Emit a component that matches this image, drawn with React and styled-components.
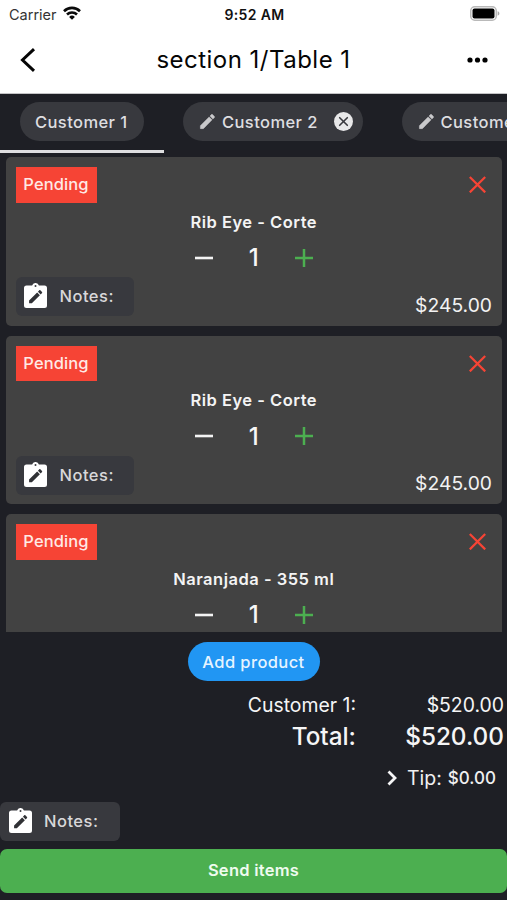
import { useState } from 'react';
import styled, { createGlobalStyle } from 'styled-components';

const GlobalStyle = createGlobalStyle`
  * {
    box-sizing: border-box;
  }
  body {
    margin: 0;
    background: #1e1f25;
    font-family: Inter, 'Liberation Sans', sans-serif;
  }
  button {
    border: none;
    padding: 0;
    background: none;
    color: inherit;
    font-family: inherit;
  }
  svg {
    display: block;
    flex-shrink: 0;
  }
`;

const Screen = styled.div`
  display: flex;
  flex-direction: column;
  width: 507px;
  height: 900px;
  overflow: hidden;
  color: #f2f2f2;
  background: #1e1f25;
`;

const StatusBar = styled.div`
  display: grid;
  grid-template-columns: 1fr auto 1fr;
  align-items: center;
  height: 28px;
  padding: 0 7px 0 9px;
  color: #111;
  background: #fff;
  .carrier {
    display: flex;
    align-items: center;
    gap: 6px;
    color: #333;
    font-size: 14.5px;
  }
  .time {
    font-size: 14px;
    font-weight: 600;
    letter-spacing: 0.35px;
  }
  .battery {
    justify-self: end;
    margin-top: -2px;
  }
  .wifi {
    margin-top: -3px;
  }
`;

const NavBar = styled.header`
  display: grid;
  grid-template-columns: 60px 1fr 60px;
  align-items: center;
  height: 66px;
  padding-bottom: 2px;
  color: #050505;
  background: #fff;
  border-bottom: 1px solid #c4c4c6;
  h1 {
    margin: 0;
    font-size: 24px;
    font-weight: 400;
    letter-spacing: 0.48px;
    text-align: center;
  }
  .back {
    padding-left: 20px;
  }
  .more {
    padding-left: 20px;
  }
`;

const Tabs = styled.nav`
  display: flex;
  flex-shrink: 0;
  height: 59px;
  overflow: hidden;
`;

const Tab = styled.div`
  flex-shrink: 0;
  height: 59px;
  padding: 8px 19.5px 0 ${(props) => (props.$active ? 20 : 19.5)}px;
  border-bottom: 3px solid ${(props) => (props.$active ? '#dedee0' : 'transparent')};
`;

const Chip = styled.button`
  display: flex;
  align-items: center;
  width: ${(props) => props.$width}px;
  height: 39px;
  padding: 0 10px 0 15px;
  border-radius: 20px;
  color: #dedee0;
  background: #38393e;
  font-size: 16.5px;
  font-weight: 500;
  letter-spacing: 0.42px;
  white-space: nowrap;
  .pencil {
    margin-right: 5px;
  }
  .remove {
    margin-left: auto;
  }
`;

const ItemList = styled.main`
  display: flex;
  flex-direction: column;
  flex-shrink: 0;
  gap: 10px;
  height: 479px;
  padding: 4px 5px 0 6px;
  overflow-y: auto;
  scrollbar-width: none;
`;

const Card = styled.section`
  display: flex;
  flex-direction: column;
  flex-shrink: 0;
  height: 168.5px;
  padding: 10px 10px 9px 9.5px;
  border-radius: 5px;
  background: #424242;
`;

const CardTop = styled.div`
  display: flex;
  align-items: center;
  justify-content: space-between;
  height: 35.5px;
  padding-right: 6px;
`;

const Badge = styled.span`
  width: 81px;
  height: 35.5px;
  color: #ffe9e5;
  background: #f64435;
  font-size: 16.5px;
  font-weight: 500;
  letter-spacing: 0.1px;
  line-height: 35px;
  text-align: center;
`;

const ItemName = styled.h2`
  margin: 9px 0 1px;
  color: #f4f4f4;
  font-size: 16.5px;
  font-weight: 600;
  letter-spacing: 0.5px;
  line-height: 20px;
  text-align: center;
`;

const Quantity = styled.div`
  display: grid;
  grid-template-columns: 50px 50px 50px;
  align-items: center;
  justify-content: center;
  justify-items: center;
  height: 50px;
  span {
    color: #f7f7f7;
    font-size: 24px;
    font-weight: 500;
  }
`;

const CardBottom = styled.div`
  display: flex;
  justify-content: space-between;
  margin-top: -5.5px;
`;

const Price = styled.span`
  padding-top: 15.5px;
  font-size: 19.3px;
  line-height: 24px;
`;

const NotesButton = styled.button`
  display: flex;
  align-items: center;
  gap: 12.5px;
  width: ${(props) => props.$width}px;
  height: 39px;
  padding: 0 0 1px 8.5px;
  border-radius: 6px;
  color: #d8d8da;
  background: #38393e;
  font-size: 16.5px;
  font-weight: 500;
  letter-spacing: 0.48px;
`;

const Footer = styled.footer`
  display: flex;
  flex-direction: column;
  flex: 1;
  padding-top: 10px;
`;

const AddButton = styled.button`
  align-self: center;
  width: 132px;
  height: 39px;
  border-radius: 20px;
  color: #e6f4ff;
  background: #2196f3;
  font-size: 16.5px;
  font-weight: 500;
  letter-spacing: 0.4px;
`;

const SumRow = styled.div`
  display: grid;
  grid-template-columns: 356px 148px;
  height: ${(props) => (props.$total ? 34 : 28)}px;
  margin-top: ${(props) => (props.$total ? 0 : 10)}px;
  color: #f5f5f6;
  font-size: ${(props) => (props.$total ? 24.3 : 19.4)}px;
  font-weight: ${(props) => (props.$total ? 500 : 400)};
  line-height: ${(props) => (props.$total ? 35 : 28)}px;
  text-align: right;
`;

const Tip = styled.button`
  display: flex;
  align-items: center;
  align-self: flex-end;
  height: 30px;
  margin: 10px 11px 0 0;
  color: #f0f0f1;
  font-size: 19.5px;
  svg {
    margin-right: 10px;
  }
  b {
    margin-left: 6px;
    font-size: 17px;
    font-weight: 500;
  }
`;

const FooterNotes = styled.div`
  margin: 9px 0 7.5px;
`;

const SendButton = styled.button`
  height: 44px;
  padding-bottom: 1px;
  border-radius: 7px;
  color: #effbef;
  background: #4caf50;
  font-size: 16.5px;
  font-weight: 600;
  letter-spacing: 0.25px;
`;

const pencilPath =
  'M3 17.25V21h3.75L17.81 9.94l-3.75-3.75L3 17.25zM20.71 7.04c.39-.39.39-1.02 0-1.41l-2.34-2.34c-.39-.39-1.02-.39-1.41 0l-1.83 1.83 3.75 3.75 1.83-1.83z';

const PencilIcon = () => (
  <svg className="pencil" width="19" height="19" viewBox="0 0 24 24">
    <path d={pencilPath} fill="#c9c9cb" stroke="#c9c9cb" strokeWidth=".6" />
  </svg>
);

const RemoveIcon = () => (
  <svg className="remove" width="19" height="19" viewBox="0 0 19 19">
    <circle cx="9.5" cy="9.5" r="9.5" fill="#e8e8e9" />
    <path d="M5.7 5.7l7.6 7.6M13.3 5.7l-7.6 7.6" stroke="#38393e" strokeWidth="1.6" strokeLinecap="round" />
  </svg>
);

const ClipboardIcon = () => (
  <svg width="23" height="26" viewBox="0 0 23 26">
    <path
      d="M2.5 2.4h5.6a3.6 3.6 0 0 1 6.8 0h5.6a2.5 2.5 0 0 1 2.5 2.500v17.600a2.500 2.500 0 0 1-2.500 2.500h-18A2.500 2.500 0 0 1 0 22.500V4.900a2.500 2.500 0 0 1 2.500-2.500z"
      fill="#fff"
    />
    <circle cx="11.5" cy="2.9" r="1" fill="#38393e" />
    <g transform="translate(2.9 4.9) scale(.73)">
      <path d={pencilPath} fill="#303135" />
    </g>
  </svg>
);

const WifiIcon = () => (
  <svg className="wifi" width="18" height="14" viewBox="0 0 18 14">
    <g fill="none" stroke="#0a0a0a" strokeWidth="2.6">
      <path d="M1 5.2a11.4 11.4 0 0 1 16 0" />
      <path d="M4 8.5a7.2 7.2 0 0 1 10 0" />
    </g>
    <path d="M9 13.8L6.1 10.900a4.200 4.200 0 0 1 5.800 0z" fill="#0a0a0a" />
  </svg>
);

const BatteryIcon = () => (
  <svg className="battery" width="30" height="15" viewBox="0 0 30 15">
    <rect x=".75" y=".75" width="25.5" height="13.5" rx="4" fill="#fff" stroke="#b9b9b9" strokeWidth="1.5" />
    <rect x="2.5" y="2.5" width="22" height="10" rx="2" fill="#000" />
    <path d="M27.6 5.3c2.400.7 2.400 3.700 0 4.400z" fill="#a8a8a8" />
  </svg>
);

const items = [
  { id: 1, name: 'Rib Eye - Corte', price: 245 },
  { id: 2, name: 'Rib Eye - Corte', price: 245 },
  { id: 3, name: 'Naranjada - 355 ml', price: 30 },
];

const money = (value) => `$${value.toFixed(2)}`;

const OrderItem = ({ name, price }) => {
  const [count, setCount] = useState(1);

  return (
    <Card>
      <CardTop>
        <Badge>Pending</Badge>
        <svg width="17" height="17" viewBox="0 0 17 17">
          <path d="M.8 1l15.4 15.400M16.200 1L.8 16.400" stroke="#f64435" strokeWidth="2.200" />
        </svg>
      </CardTop>
      <ItemName>{name}</ItemName>
      <Quantity>
        <button onClick={() => setCount(Math.max(1, count - 1))}>
          <svg width="18" height="18" viewBox="0 0 18 18">
            <path d="M0 9h18" stroke="#f4f4f4" strokeWidth="2.6" />
          </svg>
        </button>
        <span>{count}</span>
        <button onClick={() => setCount(count + 1)}>
          <svg width="18" height="18" viewBox="0 0 18 18">
            <path d="M0 9h18M9 0v18" stroke="#4caf50" strokeWidth="2.5" />
          </svg>
        </button>
      </Quantity>
      <CardBottom>
        <NotesButton $width={118}>
          <ClipboardIcon />
          Notes:
        </NotesButton>
        <Price>{money(price * count)}</Price>
      </CardBottom>
    </Card>
  );
};

const App = () => {
  const total = items.reduce((sum, item) => sum + item.price, 0);

  return (
    <Screen>
      <GlobalStyle />
      <StatusBar>
        <div className="carrier">
          Carrier
          <WifiIcon />
        </div>
        <span className="time">9:52 AM</span>
        <BatteryIcon />
      </StatusBar>
      <NavBar>
        <button className="back">
          <svg width="16" height="24" viewBox="0 0 16 24">
            <path d="M14 1.2L2.5 12 14 22.8" fill="none" stroke="#050505" strokeWidth="3" />
          </svg>
        </button>
        <h1>section 1/Table 1</h1>
        <button className="more">
          <svg width="21" height="6" viewBox="0 0 21 6">
            <circle cx="3" cy="3" r="2.6" />
            <circle cx="10.5" cy="3" r="2.6" />
            <circle cx="18" cy="3" r="2.6" />
          </svg>
        </button>
      </NavBar>
      <Tabs>
        <Tab $active>
          <Chip $width={124}>Customer 1</Chip>
        </Tab>
        <Tab>
          <Chip $width={179.5}>
            <PencilIcon />
            Customer 2
            <RemoveIcon />
          </Chip>
        </Tab>
        <Tab>
          <Chip $width={179.5}>
            <PencilIcon />
            Customer 3
            <RemoveIcon />
          </Chip>
        </Tab>
      </Tabs>
      <ItemList>
        {items.map((item) => (
          <OrderItem key={item.id} name={item.name} price={item.price} />
        ))}
      </ItemList>
      <Footer>
        <AddButton>Add product</AddButton>
        <SumRow>
          <span>Customer 1:</span>
          <span>{money(total)}</span>
        </SumRow>
        <SumRow $total>
          <span>Total:</span>
          <span>{money(total)}</span>
        </SumRow>
        <Tip>
          <svg width="10" height="16" viewBox="0 0 10 16">
            <path d="M1.5 1.5L8 8l-6.5 6.5" fill="none" stroke="#f5f5f6" strokeWidth="2.8" />
          </svg>
          Tip:
          <b>{money(0)}</b>
        </Tip>
        <FooterNotes>
          <NotesButton $width={119.5}>
            <ClipboardIcon />
            Notes:
          </NotesButton>
        </FooterNotes>
        <SendButton>Send items</SendButton>
      </Footer>
    </Screen>
  );
};

export default App;
